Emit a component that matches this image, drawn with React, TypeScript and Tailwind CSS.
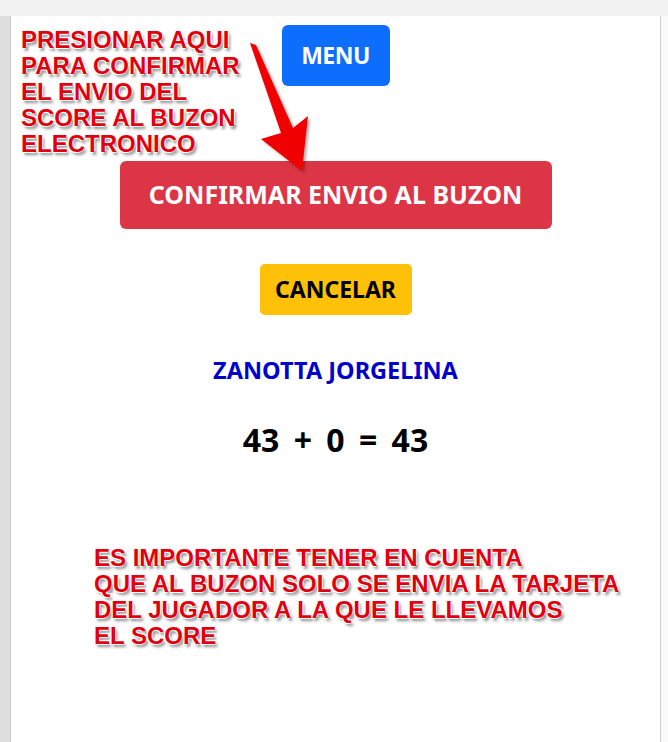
export default function App() {
  const note =
    "font-['Liberation_Sans',Arial,sans-serif] font-bold text-[#e2000f] uppercase leading-[26px] [text-shadow:-1px_-1px_0_#fff,1px_-1px_0_#fff,-1px_1px_0_#fff,2px_3px_3px_rgba(0,0,0,0.45)]"

  return (
    <div className="flex h-[742px] w-full bg-[#f2f2f2] pt-[16px]">
      <div className="w-[11px] shrink-0 border-r border-[#c9c9c9] bg-[#dedede]" />

      <div className="relative flex-1 border-r border-[#cfcfcf] bg-white">
        {/* main column */}
        <div className="flex flex-col items-center pt-[9px] font-['Noto_Sans',sans-serif]">
          <button className="h-[61px] w-[108px] rounded-[6px] bg-[#0d6efd] text-[23px] font-bold tracking-[-0.5px] text-white">
            MENU
          </button>

          <button className="mt-[75px] h-[68px] w-[432px] rounded-[6px] bg-[#dc3545] text-[25px] font-bold text-white">
            CONFIRMAR ENVIO AL BUZON
          </button>

          <button className="mt-[35px] h-[51px] w-[152px] rounded-[5px] bg-[#ffc107] text-[23px] font-bold text-black">
            CANCELAR
          </button>

          <p className="mt-[40px] text-[23.5px] font-bold leading-[31px] text-[#0000cd]">ZANOTTA JORGELINA</p>

          <p className="mt-[34px] text-[32px] font-bold leading-[40px] text-black [word-spacing:6px]">43 + 0 = 43</p>
        </div>

        {/* annotation top-left */}
        <div className={`absolute left-[10px] top-[11px] text-[24px] ${note}`}>
          <div>PRESIONAR AQUI</div>
          <div>PARA CONFIRMAR</div>
          <div>EL ENVIO DEL</div>
          <div>SCORE AL BUZON</div>
          <div>ELECTRONICO</div>
        </div>

        {/* arrow */}
        <svg className="absolute left-[216px] top-[26px]" width="90" height="150" viewBox="228 42 90 150">
          <defs>
            <filter id="sh" x="-20%" y="-20%" width="140%" height="140%">
              <feDropShadow dx="2" dy="2" stdDeviation="1.5" floodColor="#000" floodOpacity="0.35" />
            </filter>
          </defs>
          <polygon
            points="251,43 257,45 294,128 309,116 303,171 262,139 282,133"
            fill="#f00000"
            filter="url(#sh)"
          />
        </svg>

        {/* annotation bottom */}
        <div className={`absolute left-[83px] top-[529px] text-[24px] ${note}`}>
          <div>ES IMPORTANTE TENER EN CUENTA</div>
          <div>QUE AL BUZON SOLO SE ENVIA LA TARJETA</div>
          <div>DEL JUGADOR A LA QUE LE LLEVAMOS</div>
          <div>EL SCORE</div>
        </div>
      </div>

      <div className="w-[7px] shrink-0 bg-[#fafafa]" />
    </div>
  )
}
